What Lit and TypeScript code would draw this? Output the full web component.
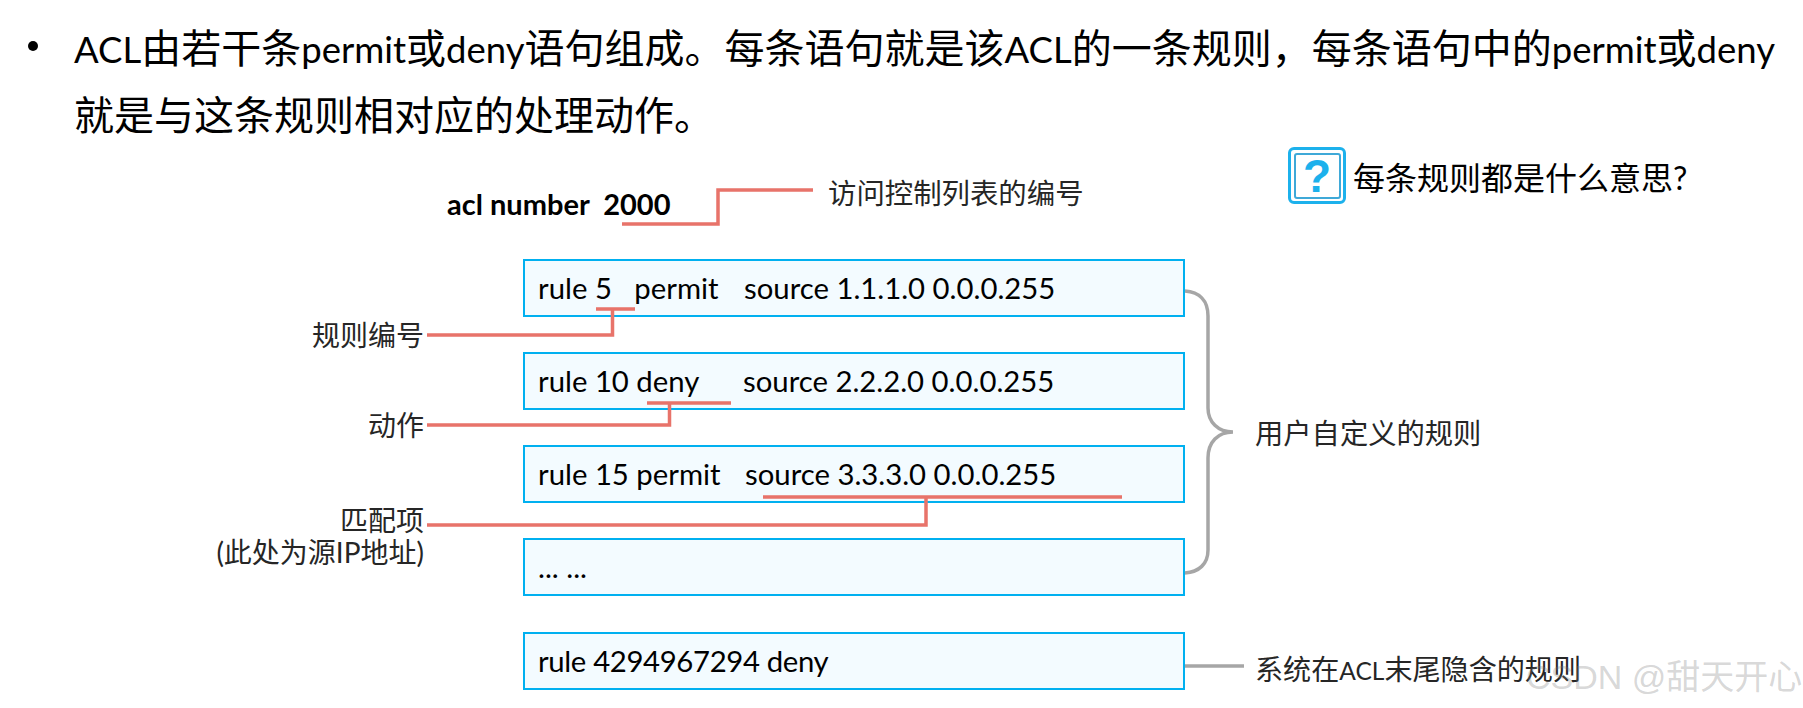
import { LitElement, html, css, svg } from "lit";
import { customElement } from "lit/decorators.js";

const RULES = [
  { head: "rule 5   permit", source: "source 1.1.1.0 0.0.0.255", width: 206 },
  { head: "rule 10 deny", source: "source 2.2.2.0 0.0.0.255", width: 205 },
  { head: "rule 15 permit", source: "source 3.3.3.0 0.0.0.255", width: 207 },
  { head: "... ...", source: "", width: 206 },
  { head: "rule 4294967294 deny", source: "", width: 400 },
];

const RED = [
  "M622 224H718V190H813",
  "M596 309H635M612.5 309V335H427",
  "M647 403H731M669.5 403V425H427",
  "M763 497H1122M926 497V525H427",
];

const LEFT_LABELS = [
  { text: "规则编号", cy: 335 },
  { text: "动作", cy: 425 },
  { text: "匹配项", cy: 520 },
  { text: "(此处为源IP地址)", cy: 552 },
];

@customElement("app-root")
export class AppRoot extends LitElement {
  static styles = css`
    :host {
      display: block;
      width: 1803px;
      height: 708px;
      overflow: hidden;
      background: #fff;
      font-family: "Lato", "Noto Sans CJK SC", sans-serif;
      color: #000;
    }
    .page {
      position: relative;
      width: 1803px;
      height: 708px;
    }
    .intro {
      display: flex;
      height: 134px;
      padding: 15px 0 0 28px;
      font-size: 40px;
      line-height: 67px;
      white-space: nowrap;
    }
    .lat {
      font-size: 36.5px;
      line-height: 1;
    }
    .dot {
      flex: none;
      width: 10px;
      height: 10px;
      margin: 26px 36px 0 0;
      border-radius: 50%;
      background: #000;
    }
    .rules {
      display: flex;
      flex-direction: column;
      gap: 35px;
      width: 662px;
      margin: 110px 0 0 523px;
    }
    .rule {
      display: flex;
      box-sizing: border-box;
      height: 58px;
      padding-left: 13px;
      border: 2.5px solid #00b0f0;
      background: #f3fbff;
      font-size: 29.3px;
      line-height: 54px;
      white-space: pre;
    }
    .rule.last {
      margin-top: 1px;
      letter-spacing: -0.35px;
    }
    .head {
      flex: none;
    }
    .lines {
      position: absolute;
      inset: 0;
      pointer-events: none;
    }
    .red {
      fill: none;
      stroke: #e8736a;
      stroke-width: 3.5;
    }
    .gray {
      fill: none;
      stroke: #a6a6a6;
      stroke-width: 3.5;
    }
    .label {
      position: absolute;
      font-size: 28px;
      line-height: 36px;
      color: #262626;
      white-space: nowrap;
      transform: translateY(-50%);
    }
    .label .lat {
      font-size: 24.5px;
    }
    .left {
      right: 1379px;
    }
    .title {
      left: 447px;
      top: 204px;
      font-size: 29px;
      font-weight: 700;
      white-space: pre;
      color: #000;
    }
    .acl-note {
      left: 828px;
      top: 193px;
      font-size: 28.4px;
    }
    .user {
      left: 1255px;
      top: 433px;
      font-size: 28.3px;
    }
    .implicit {
      left: 1255px;
      top: 669px;
      font-size: 28.1px;
    }
    .question {
      position: absolute;
      left: 1353px;
      top: 178px;
      font-size: 32px;
      line-height: 40px;
      color: #000;
      white-space: nowrap;
      transform: translateY(-50%);
    }
    .icon {
      position: absolute;
      left: 1288px;
      top: 147px;
      box-sizing: border-box;
      width: 58px;
      height: 57px;
      padding: 2.5px;
      border: 3.5px solid #1cb1ec;
      border-radius: 6px;
      background: #fff;
    }
    .icon-inner {
      display: flex;
      align-items: center;
      justify-content: center;
      box-sizing: border-box;
      height: 100%;
      border: 2.5px solid #3fa9d8;
      border-radius: 3px;
      color: #1cb1ec;
      font-family: "Liberation Sans", sans-serif;
      font-weight: 700;
      font-size: 46px;
      line-height: 1;
    }
    .mark {
      position: absolute;
      left: 1526px;
      top: 677px;
      font-family: "Liberation Sans", "Noto Sans CJK SC", sans-serif;
      font-size: 34px;
      line-height: 40px;
      color: rgba(120, 120, 120, 0.3);
      white-space: nowrap;
      transform: translateY(-50%);
    }
  `;

  render() {
    return html`
      <div class="page">
        <div class="intro">
          <span class="dot"></span>
          <div>
            <span class="lat">ACL</span>由若干条<span class="lat">permit</span>或<span class="lat">deny</span>语句组成。每条语句就是该<span class="lat">ACL</span>的一条规则，每条语句中的<span class="lat">permit</span>或<span class="lat">deny</span><br />就是与这条规则相对应的处理动作。
          </div>
        </div>
        <div class="rules">
          ${RULES.map(
            (r, i) => html`<div class="rule ${i === 4 ? "last" : ""}">
              <span class="head" style="width:${r.width}px">${r.head}</span><span>${r.source}</span>
            </div>`
          )}
        </div>
        <svg class="lines" width="1803" height="708" viewBox="0 0 1803 708">
          ${RED.map((d) => svg`<path class="red" d=${d}></path>`)}
          <path
            class="gray"
            d="M1185 291C1199 292 1208 300 1208 316V408C1208 422 1218 432 1233 432C1218 432 1208 442 1208 458V550C1208 564 1199 572 1185 573"
          ></path>
          <path class="gray" d="M1185 666H1244"></path>
        </svg>
        ${LEFT_LABELS.map(
          (l) => html`<div class="label left" style="top:${l.cy}px">${l.text}</div>`
        )}
        <div class="label title">acl number  2000</div>
        <div class="label acl-note">访问控制列表的编号</div>
        <div class="icon"><div class="icon-inner">?</div></div>
        <div class="question">每条规则都是什么意思?</div>
        <div class="label user">用户自定义的规则</div>
        <div class="label implicit">系统在<span class="lat">ACL</span>末尾隐含的规则</div>
        <div class="mark">CSDN @甜天开心</div>
      </div>
    `;
  }
}
